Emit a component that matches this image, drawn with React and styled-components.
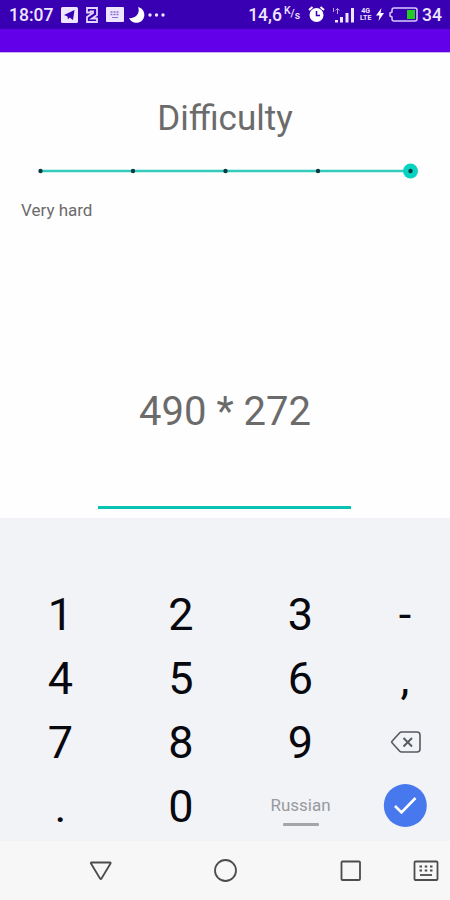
import React from 'react'
import styled, { createGlobalStyle } from 'styled-components'

const GlobalStyle = createGlobalStyle`
  body {
    margin: 0;
    background: #fff;
    font-family: Roboto, 'Noto Sans', sans-serif;
  }
`

const Screen = styled.div`
  width: 450px;
  height: 900px;
  display: flex;
  flex-direction: column;
  overflow: hidden;
`

const StatusBar = styled.header`
  display: flex;
  justify-content: space-between;
  align-items: center;
  box-sizing: border-box;
  height: 29px;
  padding: 0 8px 0 9px;
  background: #3800b2;
  color: #eee6ff;
  font-size: 17.5px;
  font-weight: 500;
`

const StatusGroup = styled.div`
  display: flex;
  align-items: center;
`

const StatusIcon = styled.span`
  display: flex;
  margin-left: ${({ $gap }) => $gap}px;
`

const Speed = styled.span`
  display: flex;
  align-items: center;
`

const Unit = styled.span`
  display: flex;
  margin-left: 2px;
  font-size: 10.5px;
  line-height: 12px;

  span:first-child {
    margin-top: -3px;
  }

  span:last-child {
    margin-top: 2px;
  }
`

const Network = styled.span`
  display: flex;
  flex-direction: column;
  width: 11px;
  margin-left: 5px;
  font-size: 7px;
  font-weight: 700;
  line-height: 7px;
  text-align: center;
`

const Percent = styled.span`
  margin-left: 4px;
`

const AppBar = styled.div`
  height: 23px;
  background: #6200ea;
  border-bottom: 1px solid #c9b3ee;
`

const Content = styled.main`
  display: flex;
  flex-direction: column;
  align-items: center;
  height: 465px;
  background: #fefefe;
  color: #6b6b6b;
`

const Title = styled.h1`
  margin: 46px 0 0;
  font-size: 35px;
  font-weight: 400;
  line-height: 40px;
`

const Slider = styled.svg`
  display: block;
  width: 450px;
  height: 20px;
  margin-top: 22px;
`

const Level = styled.div`
  align-self: flex-start;
  margin: 19px 0 0 21px;
  font-size: 17px;
  line-height: 20px;
`

const Question = styled.div`
  margin-top: 168px;
  font-size: 40px;
  line-height: 48px;
`

const Answer = styled.div`
  width: 253px;
  height: 70px;
  margin-right: 1px;
  border-bottom: 3px solid #08c2b2;
`

const Keyboard = styled.section`
  box-sizing: border-box;
  height: 323px;
  padding-top: 65px;
  background: #f1f3f6;
`

const Keys = styled.div`
  display: grid;
  grid-template-columns: 121px 120px 119px 90px;
  grid-auto-rows: 63.8px;
`

const Key = styled.div`
  display: flex;
  align-items: center;
  justify-content: center;
  color: #08080f;
  font-size: 45px;
  line-height: 63px;
`

const Language = styled(Key)`
  flex-direction: column;
  padding-top: 8px;
  color: #989a9e;
  font-size: 17px;
  line-height: 20px;

  &::after {
    content: '';
    width: 36px;
    height: 3px;
    margin-top: 8px;
    border-radius: 1px;
    background: #a3a5a9;
  }
`

const NavBar = styled.nav`
  display: flex;
  align-items: center;
  height: 59px;
  background: #f7f7f7;
`

const KEYS = ['1', '2', '3', '-', '4', '5', '6', ',', '7', '8', '9']
const TICKS = [40.5, 133, 225.5, 318, 410.5]

const TelegramIcon = () => (
  <svg width='17' height='16' viewBox='0 0 17 16'>
    <rect width='17' height='16' rx='1.5' fill='#eee6ff' />
    <path d='M3 8L13.500 3L12 13L8.500 10.500L7 12.500L6.500 9.500Z' fill='#3800b2' />
  </svg>
)

const AppIcon = () => (
  <svg width='12' height='16' viewBox='0 0 12 16' fill='none' stroke='#e2d6ff'>
    <path d='M1 5.500V1H11V8L6 11.500H11V15H1V10L7 6V4.500H4.500V5.500Z' strokeWidth='1.800' />
  </svg>
)

const KeyboardBadge = () => (
  <svg width='18' height='15' viewBox='0 0 18 15'>
    <rect width='18' height='15' rx='1' fill='#eee6ff' />
    <path d='M4.500 5H13.500M4.500 7.500H13.500' stroke='#8a70c8' strokeWidth='1.500' strokeDasharray='2 1' />
    <path d='M6 10.500H12' stroke='#8a70c8' />
  </svg>
)

const MoonIcon = () => (
  <svg width='16' height='16' viewBox='0 0 16 16'>
    <path d='M9 0A8 8 0 1 1 0 11A8 8 0 0 0 9 0Z' fill='#fff' />
  </svg>
)

const MoreIcon = () => (
  <svg width='17' height='4' viewBox='0 0 17 4' fill='#eee6ff'>
    <circle cx='2' cy='2' r='1.700' />
    <circle cx='8.500' cy='2' r='1.700' />
    <circle cx='15' cy='2' r='1.700' />
  </svg>
)

const AlarmIcon = () => (
  <svg width='17' height='17' viewBox='0 0 17 17' fill='none'>
    <path d='M1 4L4.500 1M16 4L12.500 1' stroke='#fff' strokeWidth='2' />
    <circle cx='8.500' cy='9' r='7' fill='#fff' />
    <path d='M8.500 5V9.500H12' stroke='#3800b2' strokeWidth='1.500' />
  </svg>
)

const SignalIcon = () => (
  <svg width='23' height='16' viewBox='0 0 23 16' fill='#eee6ff'>
    <path d='M3 13H6V15.500H3ZM8 10H11V15.500H8ZM13.500 6H16.500V15.500H13.500ZM19 1H22V15.500H19Z' />
    <path d='M1.500 1V5M5.500 7V1.500M3.500 3.500L5.500 1.500L7.500 3.500' fill='none' stroke='#b9a4ed' />
  </svg>
)

const BoltIcon = () => (
  <svg width='8' height='13' viewBox='0 0 8 13'>
    <path d='M5.500 0L0 7.500H3.500L2.500 13L8 5H4.500Z' fill='#fff' />
  </svg>
)

const BatteryIcon = () => (
  <svg width='29' height='15' viewBox='0 0 29 15'>
    <path d='M5 1H26Q28 1 28 3V12Q28 14 26 14H5Q3 14 3 12V10L1 9V6L3 5V3Q3 1 5 1Z' fill='none' stroke='#d9caff' strokeWidth='1.500' />
    <rect x='18' y='3' width='8' height='9' fill='#22cc22' />
  </svg>
)

const BackspaceIcon = () => (
  <svg width='32' height='24' viewBox='0 0 32 24' fill='none' stroke='#555960' strokeWidth='1.600'>
    <path d='M12.500 2H28Q31 2 31 5V19Q31 22 28 22H12.500Q11.500 22 10.500 21L3 12.800Q2.300 12 3 11.200L10.500 3Q11.500 2 12.500 2Z' />
    <path d='M14.500 8L23 16.500M23 8L14.500 16.500' strokeWidth='1.900' />
  </svg>
)

const ConfirmIcon = () => (
  <svg width='44' height='44' viewBox='0 0 44 44'>
    <circle cx='22.300' cy='21.500' r='21.500' fill='#4878ee' />
    <path d='M12 22L18.500 28.500L32.500 14' fill='none' stroke='#fff' strokeWidth='2.600' />
  </svg>
)

const NavIcons = () => (
  <svg width='450' height='59' viewBox='0 0 450 59' fill='none' stroke='#4c4c4c' strokeWidth='1.800'>
    <path d='M91.500 21.500H110Q111 21.500 110.500 22.500L101.500 37.500Q100.800 38.500 100 37.500L91 22.500Q90.500 21.500 91.500 21.500Z' />
    <circle cx='225.500' cy='29.500' r='10.500' />
    <rect x='341.500' y='20.500' width='18.500' height='18.500' rx='1' />
    <rect x='414.500' y='20.500' width='23' height='18.500' rx='1' />
    <path d='M419.500 25.500H432.500M419.500 29.500H432.500' strokeDasharray='2.500 2.750' />
    <path d='M420 34H432' />
  </svg>
)

const App = () => (
  <Screen>
    <GlobalStyle />
    <StatusBar>
      <StatusGroup>
        <span>18:07</span>
        <StatusIcon $gap={8}>
          <TelegramIcon />
        </StatusIcon>
        <StatusIcon $gap={8}>
          <AppIcon />
        </StatusIcon>
        <StatusIcon $gap={8}>
          <KeyboardBadge />
        </StatusIcon>
        <StatusIcon $gap={5}>
          <MoonIcon />
        </StatusIcon>
        <StatusIcon $gap={3}>
          <MoreIcon />
        </StatusIcon>
      </StatusGroup>
      <StatusGroup>
        <Speed>
          14,6
          <Unit>
            <span>K</span>/<span>s</span>
          </Unit>
        </Speed>
        <StatusIcon $gap={8}>
          <AlarmIcon />
        </StatusIcon>
        <StatusIcon $gap={7}>
          <SignalIcon />
        </StatusIcon>
        <Network>
          <span>4G</span>
          <span>LTE</span>
        </Network>
        <StatusIcon $gap={5}>
          <BoltIcon />
        </StatusIcon>
        <StatusIcon $gap={5}>
          <BatteryIcon />
        </StatusIcon>
        <Percent>34</Percent>
      </StatusGroup>
    </StatusBar>
    <AppBar />
    <Content>
      <Title>Difficulty</Title>
      <Slider viewBox='0 0 450 20'>
        <path d='M40.500 10H410' stroke='#35cbbc' strokeWidth='2.600' />
        <circle cx='410.500' cy='10' r='7.500' fill='#08d2c0' />
        {TICKS.map(x => (
          <circle key={x} cx={x} cy='10' r='2.200' fill='#0b3b40' />
        ))}
      </Slider>
      <Level>Very hard</Level>
      <Question>490 * 272</Question>
      <Answer />
    </Content>
    <Keyboard>
      <Keys>
        {KEYS.map(key => (
          <Key key={key}>{key}</Key>
        ))}
        <Key>
          <BackspaceIcon />
        </Key>
        <Key>.</Key>
        <Key>0</Key>
        <Language>Russian</Language>
        <Key>
          <ConfirmIcon />
        </Key>
      </Keys>
    </Keyboard>
    <NavBar>
      <NavIcons />
    </NavBar>
  </Screen>
)

export default App
